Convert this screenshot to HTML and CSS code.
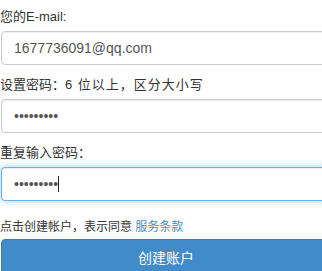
FILE: index.html
```html
<!DOCTYPE html>
<html lang="zh">
<head>
<meta charset="utf-8">
<link rel="stylesheet" href="styles.css">
</head>
<body>
<form class="signup">
  <div class="group">
    <label class="label">您的E-mail:</label>
    <input class="field" type="text" value="1677736091@qq.com">
  </div>
  <div class="group">
    <label class="label">设置密码：<span class="hint">6 位以上，区分大小写</span></label>
    <input class="field" type="password" value="123456789">
  </div>
  <div class="group">
    <label class="label">重复输入密码：</label>
    <div class="wrap">
      <input class="field focus" type="password" value="123456789">
      <span class="caret"></span>
    </div>
  </div>
  <p class="terms">点击创建帐户，表示同意 <a class="link" href="#">服务条款</a></p>
  <button class="submit" type="button">创建账户</button>
</form>
</body>
</html>
```
FILE: styles.css
```css
html, body {
  margin: 0;
  padding: 0;
  background: #fff;
  overflow: hidden;
}
body {
  font-family: "Liberation Sans", "Noto Sans CJK SC", sans-serif;
  color: #333;
}
.signup {
  width: 330px;
  margin: 0 0 0 1px;
  padding-top: 7px;
  display: flex;
  flex-direction: column;
}
.group {
  display: flex;
  flex-direction: column;
  margin-bottom: 10px;
}
.label {
  font-size: 13px;
  line-height: 20px;
  height: 20px;
  margin-bottom: 4px;
  margin-left: -1px;
  color: #333;
}
.hint {
  font-size: 13px;
  letter-spacing: 1px;
}
.wrap {
  position: relative;
  display: flex;
}
.field {
  box-sizing: border-box;
  width: 100%;
  height: 34px;
  padding: 6px 12px;
  font-family: "Liberation Sans", "Noto Sans CJK SC", sans-serif;
  font-size: 14px;
  color: #555;
  background: #fff;
  border: 1px solid #ccc;
  border-radius: 4px;
  box-shadow: inset 0 1px 1px rgba(0,0,0,0.075);
  outline: none;
}
.field.focus {
  border-color: #66afe9;
  box-shadow: inset 0 1px 1px rgba(0,0,0,0.075), 0 0 8px rgba(102,175,233,0.6);
}
.caret {
  position: absolute;
  left: 57px;
  top: 9px;
  width: 1px;
  height: 16px;
  background: #222;
}
.terms {
  margin: 6px 0 2px -1px;
  font-size: 12px;
  line-height: 20px;
  color: #333;
}
.link {
  color: #428bca;
  text-decoration: none;
}
.submit {
  width: 100%;
  height: 40px;
  padding: 8px 12px 10px;
  font-family: "Liberation Sans", "Noto Sans CJK SC", sans-serif;
  font-size: 14px;
  line-height: 20px;
  color: #fff;
  background: #428bca;
  border: 1px solid #357ebd;
  border-radius: 4px;
  text-align: center;
}
```
